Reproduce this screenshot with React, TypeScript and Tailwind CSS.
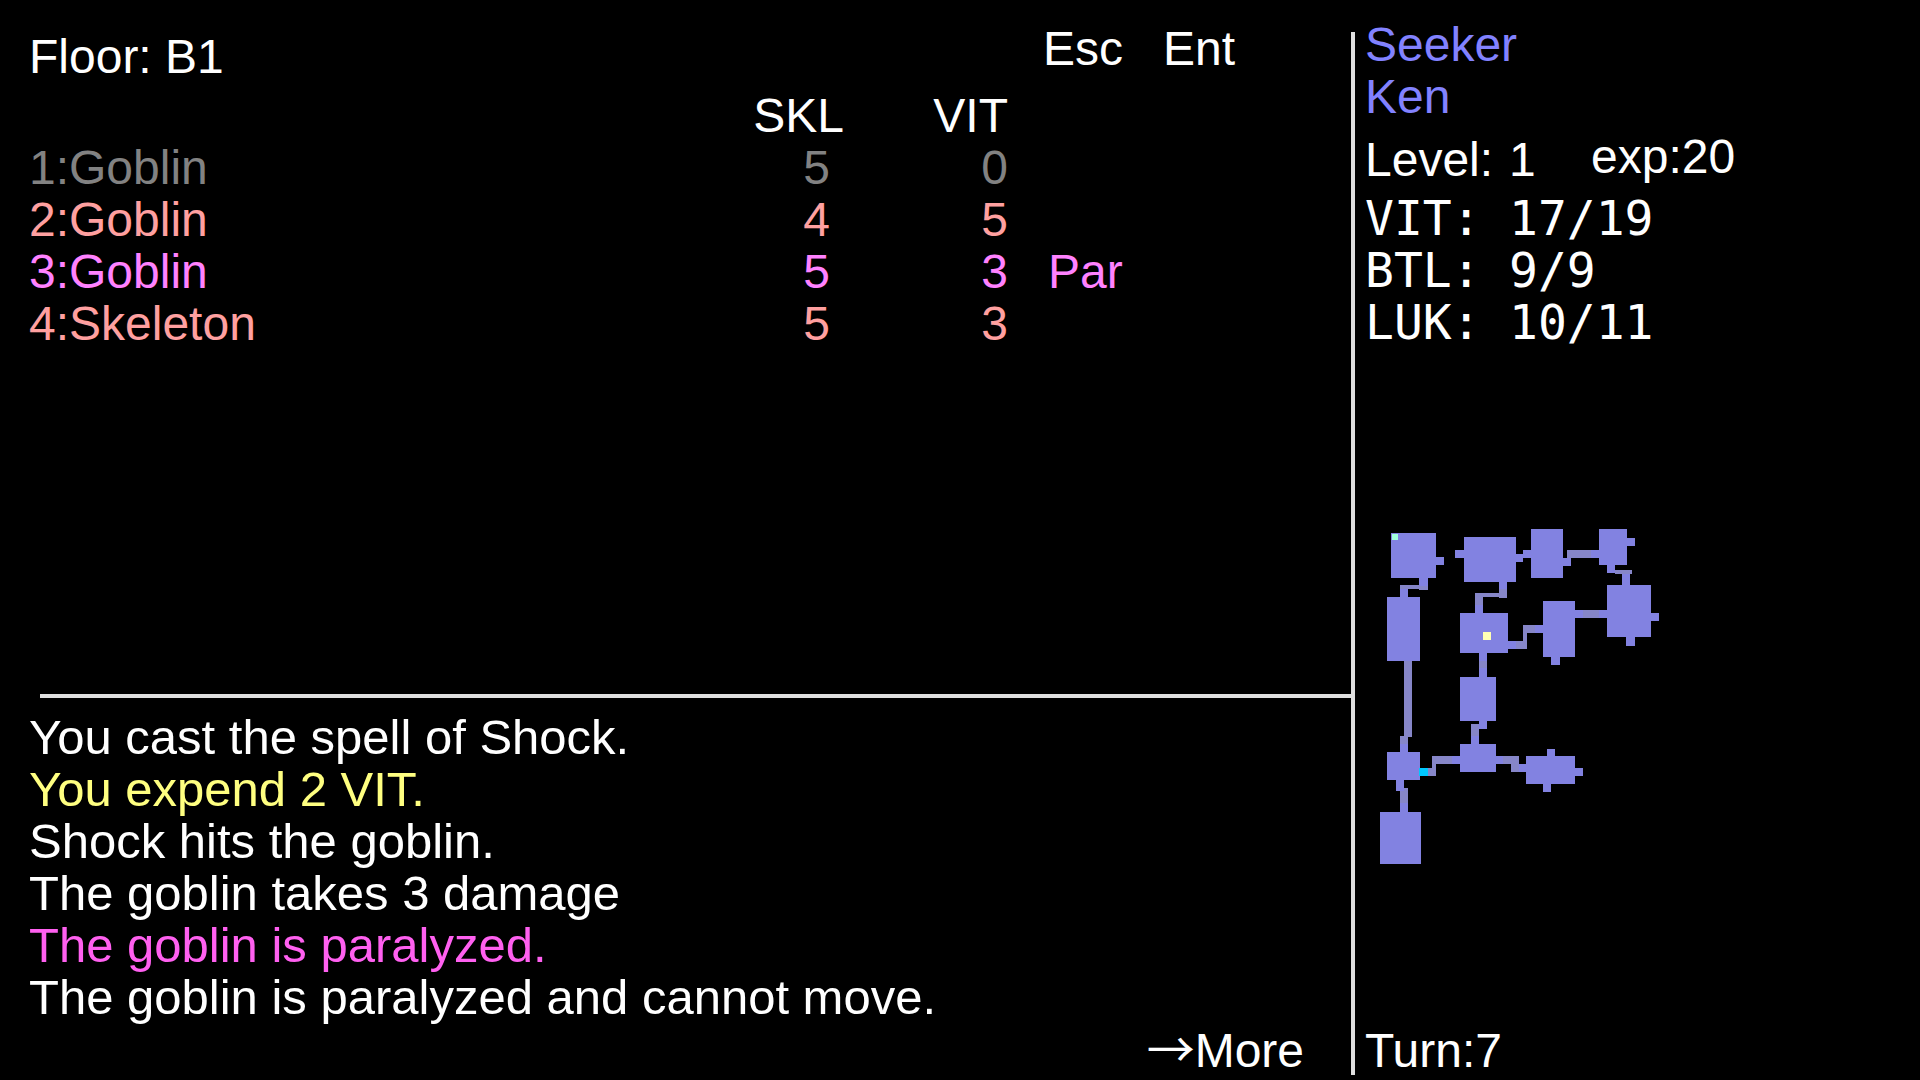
type Rect = [x: number, y: number, w: number, h: number];

const enemies = [
  { name: "1:Goblin", skl: 5, vit: 0, status: "", tone: "text-[#828282]" },
  { name: "2:Goblin", skl: 4, vit: 5, status: "", tone: "text-[#ffa0a0]" },
  { name: "3:Goblin", skl: 5, vit: 3, status: "Par", tone: "text-[#ff82ff]" },
  { name: "4:Skeleton", skl: 5, vit: 3, status: "", tone: "text-[#ffa0a0]" },
];

const messages = [
  { text: "You cast the spell of Shock.", tone: "text-white" },
  { text: "You expend 2 VIT.", tone: "text-[#ffff80]" },
  { text: "Shock hits the goblin.", tone: "text-white" },
  { text: "The goblin takes 3 damage", tone: "text-white" },
  { text: "The goblin is paralyzed.", tone: "text-[#ff60f0]" },
  { text: "The goblin is paralyzed and cannot move.", tone: "text-white" },
];

const stats = [
  { label: "VIT:", value: "17/19" },
  { label: "BTL:", value: "9/9" },
  { label: "LUK:", value: "10/11" },
];

// Rooms together with their door stubs.
const rooms: Rect[] = [
  [31, 23, 45, 45], [76, 47, 8, 8], [59, 67, 9, 9], [40, 79, 8, 9],
  [27, 87, 33, 64], [27, 242, 33, 28], [40, 234, 8, 8], [36, 269, 8, 12],
  [40, 293, 8, 9], [20, 302, 41, 52],
  [104, 27, 52, 45], [95, 40, 9, 8], [156, 44, 7, 8], [163, 40, 8, 8], [139, 71, 8, 8],
  [171, 19, 32, 49], [202, 48, 9, 8], [231, 40, 8, 8],
  [239, 19, 28, 36], [266, 28, 9, 8], [247, 55, 8, 8], [262, 64, 8, 11],
  [247, 75, 44, 52], [291, 103, 8, 8], [266, 127, 9, 9], [215, 100, 8, 8], [239, 100, 8, 8],
  [183, 91, 32, 56], [191, 146, 9, 9], [175, 115, 8, 8],
  [100, 103, 48, 40], [115, 95, 8, 8], [148, 131, 8, 8], [119, 142, 8, 9], [119, 158, 8, 9],
  [100, 167, 36, 44], [119, 210, 8, 9], [111, 226, 8, 9],
  [100, 234, 36, 28], [92, 246, 8, 8], [135, 246, 8, 8],
  [166, 246, 49, 28], [187, 239, 8, 8], [215, 258, 8, 8], [183, 273, 8, 9], [159, 254, 8, 8],
];

const corridors: Rect[] = [
  [40, 75, 28, 4], [59, 75, 9, 5],
  [44, 151, 8, 76], [40, 226, 8, 8], [40, 278, 8, 15],
  [68, 258, 8, 8], [72, 246, 4, 20], [72, 246, 20, 8],
  [115, 83, 32, 4], [139, 79, 8, 9], [115, 83, 8, 12],
  [207, 40, 4, 8], [207, 40, 24, 8], [255, 60, 17, 4],
  [223, 100, 16, 8], [163, 115, 12, 8], [163, 115, 4, 24], [156, 131, 11, 8],
  [119, 151, 8, 7], [111, 214, 8, 12], [143, 246, 13, 8], [151, 246, 8, 16],
];

function DungeonMap() {
  return (
    <svg className="ml-[15px] h-[348px] w-[282px]" viewBox="20 18 282 348" shapeRendering="crispEdges" role="img" aria-label="Dungeon map">
      <g fill="#8686c8">
        {corridors.map(([x, y, w, h], i) => <rect key={i} x={x} y={y} width={w} height={h} />)}
      </g>
      <g fill="#8282e1">
        {rooms.map(([x, y, w, h], i) => <rect key={i} x={x} y={y} width={w} height={h} />)}
      </g>
      <rect x="32" y="24" width="6" height="6" fill="#a0ffdc" />
      <rect x="123" y="122" width="8" height="8" fill="#ffffb4" />
      <rect x="59" y="258" width="9" height="8" fill="#00c8ff" />
    </svg>
  );
}

export default function App() {
  return (
    <main className="flex min-h-screen bg-black font-['Liberation_Sans',sans-serif] text-[48px] leading-[52px] whitespace-nowrap text-white">
      <section className="flex min-w-0 flex-1 flex-col pb-[3px]">
        <header className="flex justify-between pt-[23px] pr-[116px] pl-[29px]">
          <h1 className="pt-2">Floor: B1</h1>
          <nav className="flex items-start gap-10">
            <button type="button">Esc</button>
            <button type="button">Ent</button>
          </nav>
        </header>
        <table className="mt-[7px] w-full table-fixed">
          <thead>
            <tr>
              <th className="p-0" aria-label="Enemy" />
              <th className="w-[92px] p-0 text-right font-normal">SKL</th>
              <th className="w-[164px] p-0 text-right font-normal">VIT</th>
              <th className="w-[343px] p-0" aria-label="Status" />
            </tr>
          </thead>
          <tbody>
            {enemies.map((e) => (
              <tr key={e.name} className={e.tone}>
                <td className="p-0 pl-[29px]">{e.name}</td>
                <td className="p-0 pr-[14px] text-right">{e.skl}</td>
                <td className="p-0 text-right">{e.vit}</td>
                <td className="p-0 pl-10">{e.status}</td>
              </tr>
            ))}
          </tbody>
        </table>
        <div className="mt-auto ml-10 h-1 bg-[#e0e0e0]" />
        <div className="pt-[13px] pl-[29px] text-[49px]" role="log">
          {messages.map((m) => <p key={m.text} className={m.tone}>{m.text}</p>)}
        </div>
        <button type="button" className="mt-0.5 mr-[47px] self-end">
          <span className="font-['Noto_Sans_CJK_JP',sans-serif] leading-10">→</span>More
        </button>
      </section>
      <div className="mt-8 mb-[5px] w-1 bg-[#e0e0e0]" />
      <aside className="flex w-[565px] flex-col pt-[19px] pb-[3px] pl-[10px]">
        <div className="text-[#8282ff]">
          <p>Seeker</p>
          <p>Ken</p>
        </div>
        <div className="mt-[11px] flex items-start">
          <span className="w-[144px]">Level:</span>
          <span className="w-[82px]">1</span>
          <span className="leading-[46px]">exp:20</span>
        </div>
        <dl className="mt-[6px] font-['DejaVu_Sans_Mono',monospace]">
          {stats.map((s) => (
            <div key={s.label} className="flex">
              <dt className="w-[144px]">{s.label}</dt>
              <dd>{s.value}</dd>
            </div>
          ))}
        </dl>
        <div className="pt-[180px]">
          <DungeonMap />
        </div>
        <p className="mt-auto">Turn:7</p>
      </aside>
    </main>
  );
}
